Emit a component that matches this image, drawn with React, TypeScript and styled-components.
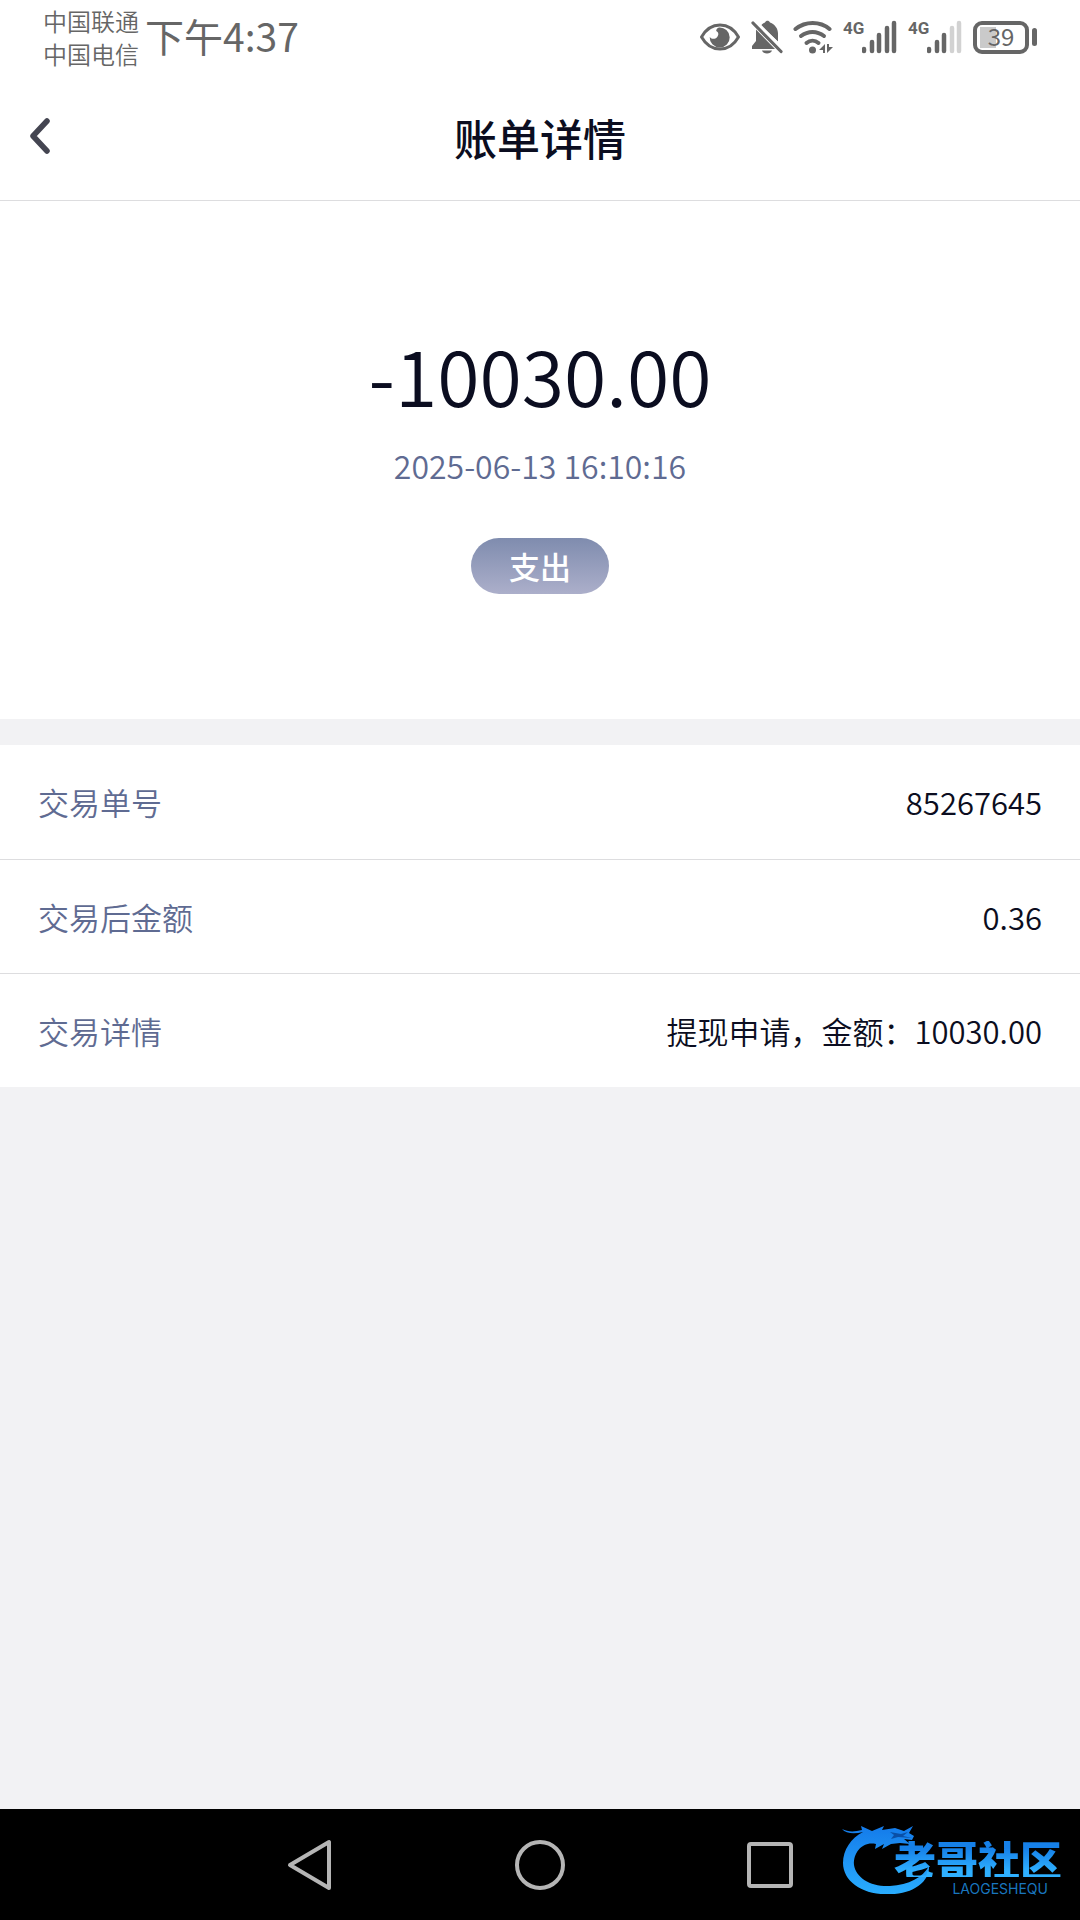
import React from "react";
import styled, { createGlobalStyle } from "styled-components";

const ink = "#0b0d20";
const muted = "#5f6b92";
const status = "#666666";
const surface = "#f2f2f4";
const line = "#dddddf";

const GlobalStyle = createGlobalStyle`
  *, *::before, *::after { box-sizing: border-box; }
  body {
    margin: 0;
    background: ${surface};
    color: ${ink};
    font-family: "Noto Sans CJK SC", "Noto Sans", sans-serif;
    font-weight: 350;
  }
`;

const Page = styled.div`
  min-height: 100vh;
  display: flex;
  flex-direction: column;
`;

const StatusBar = styled.div`
  display: flex;
  align-items: center;
  justify-content: space-between;
  height: 74px;
  padding: 0 43px;
  background: #fff;
  color: ${status};
`;

const StatusLeft = styled.div`
  display: flex;
  align-items: flex-start;
  gap: 6px;
`;

const Carriers = styled.div`
  font-size: 24px;
  line-height: 33px;
`;

const Clock = styled.time`
  font-size: 39px;
  line-height: 62px;
  font-weight: 400;
`;

const StatusIcons = styled.div`
  display: flex;
  align-items: center;
  gap: 10px;

  svg { display: block; }
`;

const Signal = styled.div`
  display: flex;
  align-items: flex-start;
  padding-right: 1px;
`;

const NetworkType = styled.span`
  width: 19px;
  font-family: "Liberation Sans Narrow", "Roboto", sans-serif;
  font-size: 17px;
  line-height: 16px;
  font-weight: 700;
`;

const Battery = styled.div`
  display: flex;
  align-items: center;
  gap: 3px;

  &::after {
    content: "";
    width: 5px;
    height: 18px;
    border-radius: 3px;
    background: ${status};
  }
`;

const BatteryBody = styled.span`
  width: 56px;
  height: 33px;
  border: 4px solid ${status};
  border-radius: 9px;
  background: linear-gradient(#cacaca, #cacaca) 3px 2px / 16px 21px no-repeat;
  font-size: 24px;
  line-height: 22px;
  font-weight: 400;
  text-align: center;
`;

const Header = styled.header`
  display: grid;
  grid-template-columns: 80px 1fr 80px;
  align-items: center;
  height: 127px;
  border-bottom: 1px solid ${line};
  background: #fff;
`;

const BackButton = styled.button`
  display: flex;
  align-items: center;
  height: 80px;
  padding: 0 0 0 28px;
  border: 0;
  background: none;
  color: #444551;
`;

const Title = styled.h1`
  margin: 0;
  font-size: 43px;
  line-height: 60px;
  font-weight: 500;
  text-align: center;
`;

const Summary = styled.section`
  display: flex;
  flex-direction: column;
  align-items: center;
  padding: 128px 0 125px;
  background: #fff;
`;

const Amount = styled.div`
  font-size: 77px;
  line-height: 90px;
`;

const DateTime = styled.time`
  margin-top: 24px;
  color: ${muted};
  font-size: 32px;
  line-height: 44px;
`;

const Tag = styled.span`
  margin-top: 51px;
  padding: 0 38px;
  border-radius: 28px;
  background: linear-gradient(#7f8cae, #acafca);
  color: #fff;
  font-size: 31px;
  line-height: 56px;
  font-weight: 500;
`;

const Details = styled.dl`
  margin: 26px 0 0;
  background: #fff;
`;

const Row = styled.div`
  display: flex;
  align-items: center;
  justify-content: space-between;
  min-height: 114px;
  padding: 0 38px;
  font-size: 31px;
  line-height: 44px;

  & + & { border-top: 1px solid ${line}; }
`;

const Label = styled.dt`
  color: ${muted};
`;

const Value = styled.dd`
  margin: 0;
`;

const NavBar = styled.nav`
  position: relative;
  display: flex;
  align-items: center;
  justify-content: center;
  gap: 150px;
  height: 111px;
  margin-top: auto;
  background: #000;
`;

const NavButton = styled.button`
  display: flex;
  align-items: center;
  justify-content: center;
  width: 80px;
  height: 80px;
  padding: 0;
  border: 0;
  background: none;
  color: #b5b5b5;
`;

const Watermark = styled.div`
  position: absolute;
  right: 12px;
  top: 12px;
  display: grid;
  justify-items: end;
  width: 226px;
  padding: 20px 6px 0 0;
`;

const Dragon = styled.svg`
  position: absolute;
  left: 0;
  top: 0;
`;

const Brand = styled.span`
  position: relative;
  background: linear-gradient(#1680e8 20%, #2fb0ff 85%);
  background-clip: text;
  color: transparent;
  font-size: 42px;
  line-height: 36px;
  font-weight: 900;
`;

const BrandLatin = styled.span`
  position: relative;
  margin-top: 5px;
  padding-right: 14px;
  color: #1976bf;
  font-family: "Inter", sans-serif;
  font-size: 14px;
  line-height: 14px;
  font-weight: 400;
`;

const EyeIcon = () => (
  <svg width="42" height="30" viewBox="0 0 42 30" fill="none" aria-hidden="true">
    <path d="M2.500 15C7 7 13.500 3 21 3s14 4 18.500 12C35 23 28.500 27 21 27S7 23 2.500 15Z" stroke="currentColor" strokeWidth="3" strokeLinejoin="round" />
    <path d="M20 5.500a10 10 0 1 1-9.300 9.500c2 2.500 5.500 2.300 7.300.3 2.200-2.500 1.500-5.500-.8-6.300 0-1.800 1.200-3 2.800-3.500Z" fill="currentColor" />
  </svg>
);

const BellOffIcon = () => (
  <svg width="32" height="34" viewBox="0 0 32 34" aria-hidden="true">
    <path d="M5 9.500 24 29H1v-3l4-5Z" fill="currentColor" />
    <path d="M10 5.500c1-1.500 2.500-2.500 4-3 1-2.500 4-2.500 5 0 5 2 8 6 8 11v8Z" fill="currentColor" />
    <path d="M11 30.500h10c-1 4-9 4-10 0Z" fill="currentColor" />
    <path d="m5 1 27 27.500" stroke="#fff" strokeWidth="2" />
    <path d="m2 3 28 28.500" stroke="currentColor" strokeWidth="3.200" strokeLinecap="round" />
  </svg>
);

const WifiIcon = () => (
  <svg width="40" height="34" viewBox="0 0 40 34" fill="none" aria-hidden="true">
    <g stroke="currentColor" strokeWidth="4" strokeLinecap="round">
      <path d="M2.500 9c10-8 24.500-8 34 0" />
      <path d="M8 16c7-5.500 16-5.500 23 0" />
      <path d="M13.500 23c3.500-3 8.500-3 12 0" />
    </g>
    <circle cx="19.500" cy="30" r="3.500" fill="currentColor" />
    <path d="M32 24v9h-2v-3h-4ZM34 33v-9h2v3h4Z" fill="currentColor" />
  </svg>
);

const bars = [
  { x: 2, top: 29 },
  { x: 10, top: 22 },
  { x: 17, top: 15 },
  { x: 25, top: 8 },
  { x: 32, top: 3 },
];

const SignalIcon = ({ level }: { level: number }) => (
  <svg width="35" height="34" viewBox="0 0 35 34" aria-hidden="true">
    {bars.map((bar, i) => (
      <path
        key={bar.x}
        d={`M${bar.x} ${bar.top}V31`}
        stroke={i < level ? status : "#d2d2d2"}
        strokeWidth="4.500"
        strokeLinecap="round"
      />
    ))}
  </svg>
);

const DragonIcon = () => (
  <Dragon width="96" height="74" viewBox="0 0 96 74" aria-hidden="true">
    <defs>
      <linearGradient id="dragon" x1="0" y1="0" x2="0" y2="1">
        <stop offset="0" stopColor="#147bea" />
        <stop offset="1" stopColor="#29adff" />
      </linearGradient>
    </defs>
    <path
      fill="url(#dragon)"
      d="M0 8c6 3 12 3 20 1l-1-4 11 5 12-5-2 4 13-2 9 3 9-5-4 7 5 3-2 4-8-1 6 5-10-1-9 1-9 5 2-5-9 5 1-5C21 20 11 31 12 44c2 13 17 22 36 21 19-1 33-9 39-20 1 16-17 29-41 28C20 74 1 60 1 42 1 29 9 17 21 11 13 13 4 13 0 8Z"
    />
    <path d="m48 11 11 2 7-2-5 4 9 2-14-1-7 2 3-4Z" fill="#0a4fa6" />
  </Dragon>
);

const details = [
  { label: "交易单号", value: "85267645" },
  { label: "交易后金额", value: "0.36" },
  { label: "交易详情", value: "提现申请\uFF0C金额\uFF1A10030.00" },
];

export default function App() {
  return (
    <Page>
      <GlobalStyle />
      <StatusBar>
        <StatusLeft>
          <Carriers>
            <div>中国联通</div>
            <div>中国电信</div>
          </Carriers>
          <Clock>下午4:37</Clock>
        </StatusLeft>
        <StatusIcons>
          <EyeIcon />
          <BellOffIcon />
          <WifiIcon />
          <Signal>
            <NetworkType>4G</NetworkType>
            <SignalIcon level={5} />
          </Signal>
          <Signal>
            <NetworkType>4G</NetworkType>
            <SignalIcon level={3} />
          </Signal>
          <Battery>
            <BatteryBody>39</BatteryBody>
          </Battery>
        </StatusIcons>
      </StatusBar>

      <Header>
        <BackButton type="button" aria-label="返回">
          <svg width="24" height="38" viewBox="0 0 24 38" fill="none" aria-hidden="true">
            <path d="M19 3 5 18l14 15" stroke="currentColor" strokeWidth="5.500" strokeLinecap="round" strokeLinejoin="round" />
          </svg>
        </BackButton>
        <Title>账单详情</Title>
      </Header>

      <main>
        <Summary>
          <Amount>-10030.00</Amount>
          <DateTime dateTime="2025-06-13T16:10:16">2025-06-13 16:10:16</DateTime>
          <Tag>支出</Tag>
        </Summary>
        <Details>
          {details.map((item) => (
            <Row key={item.label}>
              <Label>{item.label}</Label>
              <Value>{item.value}</Value>
            </Row>
          ))}
        </Details>
      </main>

      <NavBar>
        <NavButton type="button" aria-label="后退">
          <svg width="46" height="52" viewBox="0 0 46 52" fill="none" aria-hidden="true">
            <path d="M42 3v46L3 26Z" stroke="currentColor" strokeWidth="4" strokeLinejoin="round" />
          </svg>
        </NavButton>
        <NavButton type="button" aria-label="主屏幕">
          <svg width="50" height="50" viewBox="0 0 50 50" fill="none" aria-hidden="true">
            <circle cx="25" cy="25" r="23" stroke="currentColor" strokeWidth="4" />
          </svg>
        </NavButton>
        <NavButton type="button" aria-label="最近任务">
          <svg width="46" height="46" viewBox="0 0 46 46" fill="none" aria-hidden="true">
            <rect x="2" y="2" width="42" height="42" rx="2" stroke="currentColor" strokeWidth="4" />
          </svg>
        </NavButton>
        <Watermark>
          <DragonIcon />
          <Brand>老哥社区</Brand>
          <BrandLatin>LAOGESHEQU</BrandLatin>
        </Watermark>
      </NavBar>
    </Page>
  );
}
